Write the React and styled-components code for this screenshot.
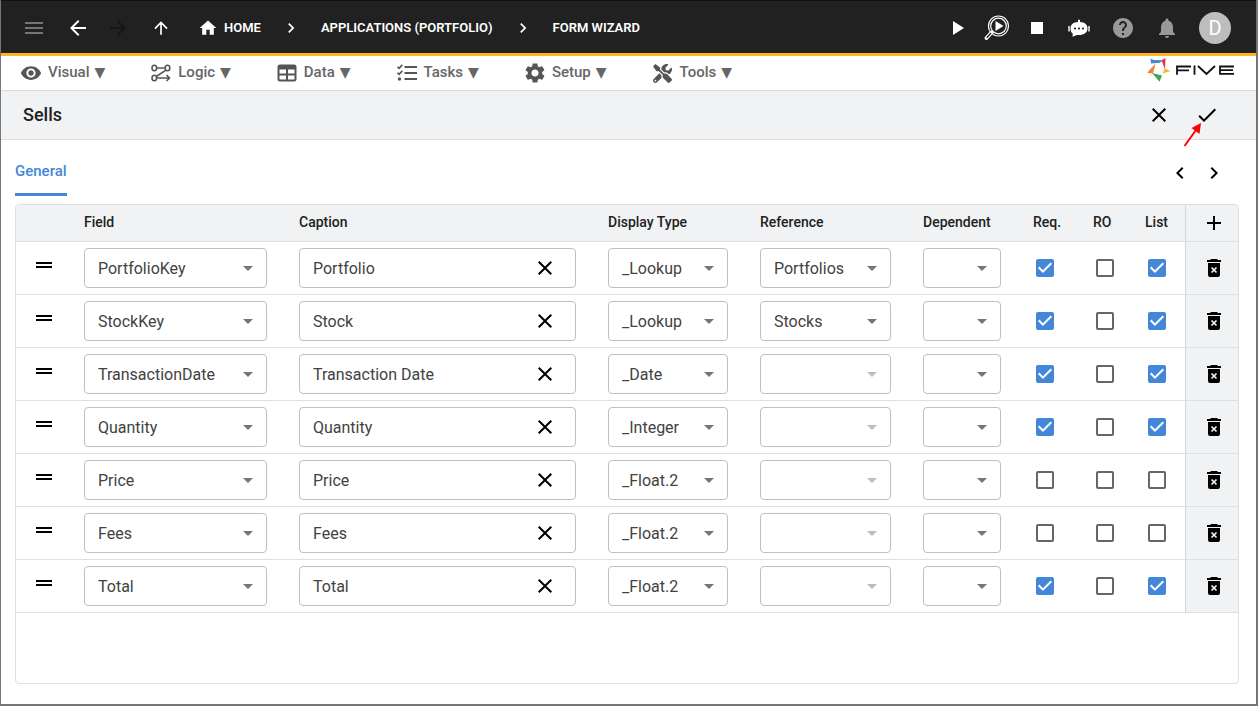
import { useState } from 'react'
import styled, { createGlobalStyle } from 'styled-components'
import {
  MdAdd,
  MdArrowBack,
  MdArrowDropDown,
  MdArrowForward,
  MdArrowUpward,
  MdCheck,
  MdChevronLeft,
  MdChevronRight,
  MdClose,
  MdDragHandle,
  MdHelp,
  MdHome,
  MdMenu,
  MdNotifications,
  MdPlayArrow,
  MdRemoveRedEye,
  MdSettings,
  MdStop
} from 'react-icons/md'
import { FaTools } from 'react-icons/fa'

const GlobalStyle = createGlobalStyle`
  * {
    box-sizing: border-box;
  }
  body {
    margin: 0;
    font-family: Roboto, 'Liberation Sans', sans-serif;
    color: #212121;
    background-color: #fff;
  }
  button, input, select {
    font-family: inherit;
    margin: 0;
  }
`

const Window = styled.div`
  display: flex;
  flex-direction: column;
  min-height: 100vh;
  border: solid #757575;
  border-width: 0 2px 2px 1px;
`
const TopBar = styled.header`
  display: flex;
  align-items: center;
  justify-content: space-between;
  height: 56px;
  padding: 2px 25px 0 11px;
  border-top: 1px solid #111;
  border-bottom: 3px solid #fbb423;
  background-color: #212121;
`
const NavGroup = styled.nav`
  display: flex;
  align-items: center;
`
const IconButton = styled.button`
  display: flex;
  align-items: center;
  justify-content: center;
  flex: none;
  width: ${props => props.$width || 40}px;
  height: 40px;
  padding: 0;
  border: none;
  background: none;
  color: ${props => props.$color || '#000'};
  cursor: pointer;
`
const Crumb = styled.a`
  display: flex;
  align-items: center;
  gap: 6px;
  font-size: 13px;
  font-weight: 600;
  line-height: 24px;
  color: white;
  text-decoration: none;
`
const CrumbSeparator = styled.span`
  display: flex;
  justify-content: center;
  width: 60px;
  color: white;
`
const BackButtons = styled.div`
  display: flex;
  align-items: center;
  margin-right: 12px;
`
const Actions = styled.div`
  display: flex;
  align-items: center;
  gap: 4px;
`
const Avatar = styled.button`
  width: 32px;
  height: 32px;
  margin-left: 8px;
  padding: 0;
  border: none;
  border-radius: 50%;
  font-size: 20px;
  line-height: 32px;
  color: white;
  background-color: #bdbdbd;
`
const MenuBar = styled.div`
  display: flex;
  justify-content: space-between;
  height: 35px;
  padding: 0 21px 0 20px;
  border-bottom: 1px solid #dcdcdc;
`
const Menus = styled.nav`
  display: flex;
  gap: 46px;
`
const MenuButton = styled.button`
  display: flex;
  align-items: center;
  gap: 7px;
  padding: 0;
  border: none;
  background: none;
  font-size: 15px;
  font-weight: 500;
  line-height: 20px;
  color: #666;
`
const MenuIcon = styled.span`
  display: flex;
  justify-content: center;
  width: 20px;
  color: #555;
  svg {
    flex: none;
  }
`
const MenuLabel = styled.span`
  display: flex;
  gap: 5px;
  padding-bottom: 2px;
`
const MenuArrow = styled.span`
  font-family: 'DejaVu Sans', sans-serif;
  font-size: 14px;
  font-weight: 400;
`
const LogoLink = styled.a`
  padding-top: 2px;
`
const TitleBar = styled.div`
  display: flex;
  align-items: center;
  justify-content: space-between;
  height: 49px;
  padding: 0 29px 0 22px;
  border-bottom: 1px solid #dcdfe1;
  background-color: #f1f2f4;
`
const Title = styled.h1`
  margin: 0;
  font-size: 18px;
  font-weight: 500;
  line-height: 24px;
`
const TitleActions = styled.div`
  position: relative;
  display: flex;
  gap: 8px;
`
const Pointer = styled.svg`
  position: absolute;
  right: 24px;
  top: 27px;
  pointer-events: none;
`
const TabRow = styled.div`
  display: flex;
  align-items: flex-end;
  justify-content: space-between;
  height: 56px;
  padding: 0 25px 0 14px;
`
const Tab = styled.button`
  height: 50px;
  padding: 2px 0 0;
  border: none;
  border-bottom: 3px solid #4487d9;
  border-radius: 2px 2px 0 0;
  background: none;
  font-size: 15px;
  font-weight: 500;
  color: #4487d9;
`
const Pager = styled.div`
  display: flex;
  align-items: center;
  height: 46px;
`
const Panel = styled.main`
  flex: 1;
  margin: 8px 17px 20px 14px;
  border: 1px solid #dddfe1;
  border-radius: 4px;
  overflow: hidden;
`
const Grid = styled.table`
  width: 100%;
  table-layout: fixed;
  border-collapse: separate;
  border-spacing: 0;
`
const HeadCell = styled.th`
  height: 37px;
  padding: 0 0 2px 16px;
  border-bottom: 1px solid #dddfe1;
  background-color: #f1f2f4;
  font-size: 14px;
  font-weight: 500;
  line-height: 20px;
  text-align: left;
`
const Cell = styled.td`
  height: 53px;
  padding: 0 16px;
  border-bottom: 1px solid #dddfe1;
`
const DragCell = styled(Cell)`
  padding: 0 0 6px 4px;
`
const CheckCell = styled(Cell)`
  padding: 0 0 0 19px;
`
const ActionHead = styled(HeadCell)`
  padding: 0 0 0 4px;
  border-left: 1px solid #d3d5d8;
`
const ActionCell = styled(Cell)`
  padding: 0 0 0 4px;
  border-left: 1px solid #d3d5d8;
  background-color: #f1f2f4;
`
const CellButton = styled(IconButton)`
  width: 100%;
  height: 34px;
`
const Field = styled.div`
  display: flex;
  align-items: center;
  position: relative;
  height: 40px;
  border: 1px solid #bfbfbf;
  border-radius: 4px;
  background-color: #fff;
`
const Select = styled.select`
  appearance: none;
  width: 100%;
  height: 38px;
  padding: 0 32px 0 13px;
  border: none;
  background: none;
  font-size: 16px;
  color: #424242;
`
const Caret = styled(MdArrowDropDown)`
  position: absolute;
  right: 6px;
  color: ${props => (props.$dim ? '#bdbdbd' : '#757575')};
  pointer-events: none;
`
const TextInput = styled.input`
  flex: 1;
  min-width: 0;
  height: 38px;
  padding: 0 0 0 13px;
  border: none;
  background: none;
  font-size: 16px;
  color: #424242;
`
const ClearButton = styled(IconButton)`
  height: 38px;
  margin-right: 10px;
`
const Checkbox = styled.input`
  appearance: none;
  display: grid;
  place-content: center;
  width: 18px;
  height: 18px;
  border: 2px solid #666;
  border-radius: 2px;
  &:checked {
    border-color: #4487d9;
    background-color: #4487d9;
  }
  &:checked::before {
    content: '';
    width: 14px;
    height: 12px;
    background-color: white;
    clip-path: polygon(0 50%, 10% 38%, 35% 68%, 90% 4%, 100% 16%, 35% 92%);
  }
`

function DebugIcon() {
  return (
    <svg width="26" height="26" viewBox="0 0 26 26" fill="none" stroke="white">
      <circle cx="14.5" cy="11" r="10" strokeWidth="1.2" />
      <circle cx="14.5" cy="11" r="7.8" strokeWidth="1.2" />
      <path d="M11.5 6v10l8-5z" fill="white" stroke="none" />
      <path d="M7.5 17.5l-5 5.500" strokeWidth="3.8" strokeLinecap="round" />
      <path d="M7 18l-4.300 4.800" stroke="#212121" strokeWidth="1.3" />
    </svg>
  )
}

function BotIcon() {
  return (
    <svg width="22" height="18" viewBox="0 0 22 18" fill="white">
      <path d="M10 3V1.500a1 1 0 0 1 2 0V3c4.500.2 7.500 2.500 7.500 6.500S16 16 11 16H9l-4.500 1.800.3-3C3.200 13.500 2.500 11.800 2.500 9.500 2.500 5.500 5.500 3.200 10 3z" />
      <path d="M.3 7h1.400v5.500H.3zM20.300 7h1.400v5.500h-1.400z" />
      <circle cx="7" cy="9.5" r="1.1" fill="#212121" />
      <circle cx="11" cy="9.5" r="1.1" fill="#212121" />
      <circle cx="15" cy="9.5" r="1.1" fill="#212121" />
    </svg>
  )
}

function LogicIcon() {
  return (
    <svg width="20" height="18" viewBox="0 0 20 18" fill="none" stroke="currentColor" strokeWidth="1.6">
      <ellipse cx="3.3" cy="4" rx="2.3" ry="2.8" />
      <ellipse cx="16.5" cy="4" rx="2.3" ry="2.8" />
      <ellipse cx="3.3" cy="14" rx="2.3" ry="2.8" />
      <path d="M5.600 4h8.600M15 6.200L5.200 12.500M5.600 14h12.500M15.500 11l3 3-3 3" />
    </svg>
  )
}

function DataIcon() {
  return (
    <svg width="20" height="18" viewBox="0 0 20 18" fill="none" stroke="currentColor" strokeWidth="2">
      <rect x="1.5" y="1.5" width="17" height="15" rx="1.5" />
      <path d="M1 3.500h18" strokeWidth="4" />
      <path d="M10 4v12M2 10.500h16" />
    </svg>
  )
}

function TasksIcon() {
  return (
    <svg width="20" height="18" viewBox="0 0 20 18" fill="none" stroke="currentColor" strokeWidth="1.6">
      <path d="M7.500 3H20M7.500 9H20M7.500 15H20" strokeWidth="2" />
      <path d="M.5 2.800l1.600 1.600L5.300.9M.5 8.800l1.600 1.600L5.300 6.900" />
      <circle cx="2.5" cy="15" r="1.7" fill="currentColor" stroke="none" />
    </svg>
  )
}

function DeleteIcon() {
  return (
    <svg width="14" height="18" viewBox="0 0 14 18">
      <path d="M4 0h6l1 1h3v2H0V1h3zM1 4h12v12a2 2 0 0 1-2 2H3a2 2 0 0 1-2-2z" fill="#000" />
      <path d="M4.500 8.500l5 5M9.500 8.500l-5 5" stroke="#f1f2f4" strokeWidth="1.7" />
    </svg>
  )
}

function Logo() {
  return (
    <svg width="88" height="24" viewBox="0 0 88 24">
      <path d="M3.500.8L7 2l9 .2L13 4.800 4 5.500z" fill="#4487d9" />
      <path d="M14.500 2.300L18.500 0 18 11.500z" fill="#e5353a" />
      <path d="M8.500 5.500L0 14.800l6 .7z" fill="#f58233" />
      <path d="M15.500 15.500l8-2.500-5.500-2.500z" fill="#fbb423" />
      <path d="M5 15l7.500 8.700 2.500-6.200z" fill="#3fa65a" />
      <g fill="none" stroke="#111" strokeWidth="1.8">
        <path d="M30 16.800V8.500h14M30 12.400h12M47.500 7.600v9.200M51 8l8.500 8 8.500-8" />
        <path d="M87 8.500H73v7.400h14M73 12.200h13" />
      </g>
    </svg>
  )
}

const menus = [
  { title: 'Visual', icon: <MdRemoveRedEye size={22} /> },
  { title: 'Logic', icon: <LogicIcon /> },
  { title: 'Data', icon: <DataIcon /> },
  { title: 'Tasks', icon: <TasksIcon /> },
  { title: 'Setup', icon: <MdSettings size={24} /> },
  { title: 'Tools', icon: <FaTools size={19} /> }
]

const initialFields = [
  { field: 'PortfolioKey', caption: 'Portfolio', type: '_Lookup', reference: 'Portfolios', req: true, ro: false, list: true },
  { field: 'StockKey', caption: 'Stock', type: '_Lookup', reference: 'Stocks', req: true, ro: false, list: true },
  { field: 'TransactionDate', caption: 'Transaction Date', type: '_Date', reference: '', req: true, ro: false, list: true },
  { field: 'Quantity', caption: 'Quantity', type: '_Integer', reference: '', req: true, ro: false, list: true },
  { field: 'Price', caption: 'Price', type: '_Float.2', reference: '', req: false, ro: false, list: false },
  { field: 'Fees', caption: 'Fees', type: '_Float.2', reference: '', req: false, ro: false, list: false },
  { field: 'Total', caption: 'Total', type: '_Float.2', reference: '', req: true, ro: false, list: true }
]

/**
 * Outlined drop-down with a single current option.
 *
 * @param {Object} props
 * @param {string} props.label
 * @param {string} props.value
 * @param {boolean} props.disabled
 */
function Dropdown({ label, value, disabled }) {
  return (
    <Field>
      <Select aria-label={label} defaultValue={value} disabled={disabled}>
        <option value={value}>{value}</option>
      </Select>
      <Caret size={24} $dim={disabled} />
    </Field>
  )
}

function FieldRow({ row, update, remove }) {
  return (
    <tr>
      <DragCell>
        <CellButton aria-label="Move row"><MdDragHandle size={24} /></CellButton>
      </DragCell>
      <Cell><Dropdown label="Field" value={row.field} /></Cell>
      <Cell>
        <Field>
          <TextInput
            aria-label="Caption"
            value={row.caption}
            onChange={e => update({ caption: e.target.value })}
          />
          <ClearButton aria-label="Clear caption" onClick={() => update({ caption: '' })}>
            <MdClose size={24} />
          </ClearButton>
        </Field>
      </Cell>
      <Cell><Dropdown label="Display Type" value={row.type} /></Cell>
      <Cell><Dropdown label="Reference" value={row.reference} disabled={!row.reference} /></Cell>
      <Cell><Dropdown label="Dependent" value="" /></Cell>
      {['req', 'ro', 'list'].map(key => (
        <CheckCell key={key}>
          <Checkbox
            type="checkbox"
            aria-label={key}
            checked={row[key]}
            onChange={() => update({ [key]: !row[key] })}
          />
        </CheckCell>
      ))}
      <ActionCell>
        <CellButton aria-label="Delete row" onClick={remove}><DeleteIcon /></CellButton>
      </ActionCell>
    </tr>
  )
}

function App() {
  const [fields, setFields] = useState(initialFields)

  const update = (index, change) =>
    setFields(fields.map((row, i) => (i === index ? { ...row, ...change } : row)))

  const remove = index => setFields(fields.filter((row, i) => i !== index))

  const add = () =>
    setFields([...fields, { field: '', caption: '', type: '', reference: '', req: false, ro: false, list: false }])

  return (
    <Window>
      <GlobalStyle />
      <TopBar>
        <NavGroup>
          <BackButtons>
            <IconButton aria-label="Menu" $color="#757575" $width={44}><MdMenu size={24} /></IconButton>
            <IconButton aria-label="Back" $color="white" $width={44}><MdArrowBack size={24} /></IconButton>
            <IconButton aria-label="Forward" $color="#151515" $width={36}><MdArrowForward size={24} /></IconButton>
            <IconButton aria-label="Up" $color="white" $width={50}><MdArrowUpward size={20} /></IconButton>
          </BackButtons>
          <Crumb href="#home"><MdHome size={20} />HOME</Crumb>
          <CrumbSeparator><MdChevronRight size={20} /></CrumbSeparator>
          <Crumb href="#applications">APPLICATIONS (PORTFOLIO)</Crumb>
          <CrumbSeparator><MdChevronRight size={20} /></CrumbSeparator>
          <Crumb href="#wizard">FORM WIZARD</Crumb>
        </NavGroup>
        <Actions>
          <IconButton aria-label="Run" $color="white" $width={36}><MdPlayArrow size={24} /></IconButton>
          <IconButton aria-label="Debug" $width={36}><DebugIcon /></IconButton>
          <IconButton aria-label="Stop" $color="white" $width={36}><MdStop size={24} /></IconButton>
          <IconButton aria-label="Assistant"><BotIcon /></IconButton>
          <IconButton aria-label="Help" $color="#999"><MdHelp size={24} /></IconButton>
          <IconButton aria-label="Notifications" $color="#999"><MdNotifications size={24} /></IconButton>
          <Avatar>D</Avatar>
        </Actions>
      </TopBar>
      <MenuBar>
        <Menus>
          {menus.map(menu => (
            <MenuButton key={menu.title}>
              <MenuIcon>{menu.icon}</MenuIcon>
              <MenuLabel>
                {menu.title}
                <MenuArrow>▼</MenuArrow>
              </MenuLabel>
            </MenuButton>
          ))}
        </Menus>
        <LogoLink href="#five" aria-label="Five"><Logo /></LogoLink>
      </MenuBar>
      <TitleBar>
        <Title>Sells</Title>
        <TitleActions>
          <IconButton aria-label="Cancel"><MdClose size={24} /></IconButton>
          <IconButton aria-label="Save"><MdCheck size={24} /></IconButton>
          <Pointer width="20" height="26" viewBox="0 0 20 26">
            <path d="M1.500 24L13 8" stroke="red" strokeWidth="2" />
            <path d="M18 1L8.500 6l8 6z" fill="red" />
          </Pointer>
        </TitleActions>
      </TitleBar>
      <TabRow>
        <Tab>General</Tab>
        <Pager>
          <IconButton aria-label="Previous" $width={34}><MdChevronLeft size={24} /></IconButton>
          <IconButton aria-label="Next" $width={34}><MdChevronRight size={24} /></IconButton>
        </Pager>
      </TabRow>
      <Panel>
        <Grid>
          <colgroup>
            <col width="52" />
            <col width="215" />
            <col />
            <col width="152" />
            <col width="163" />
            <col width="110" />
            <col width="60" />
            <col width="52" />
            <col width="56" />
            <col width="53" />
          </colgroup>
          <thead>
            <tr>
              <HeadCell aria-label="Order" />
              <HeadCell>Field</HeadCell>
              <HeadCell>Caption</HeadCell>
              <HeadCell>Display Type</HeadCell>
              <HeadCell>Reference</HeadCell>
              <HeadCell>Dependent</HeadCell>
              <HeadCell>Req.</HeadCell>
              <HeadCell>RO</HeadCell>
              <HeadCell>List</HeadCell>
              <ActionHead>
                <CellButton aria-label="Add row" onClick={add}><MdAdd size={24} /></CellButton>
              </ActionHead>
            </tr>
          </thead>
          <tbody>
            {fields.map((row, index) => (
              <FieldRow
                key={index}
                row={row}
                update={change => update(index, change)}
                remove={() => remove(index)}
              />
            ))}
          </tbody>
        </Grid>
      </Panel>
    </Window>
  )
}

export default App
